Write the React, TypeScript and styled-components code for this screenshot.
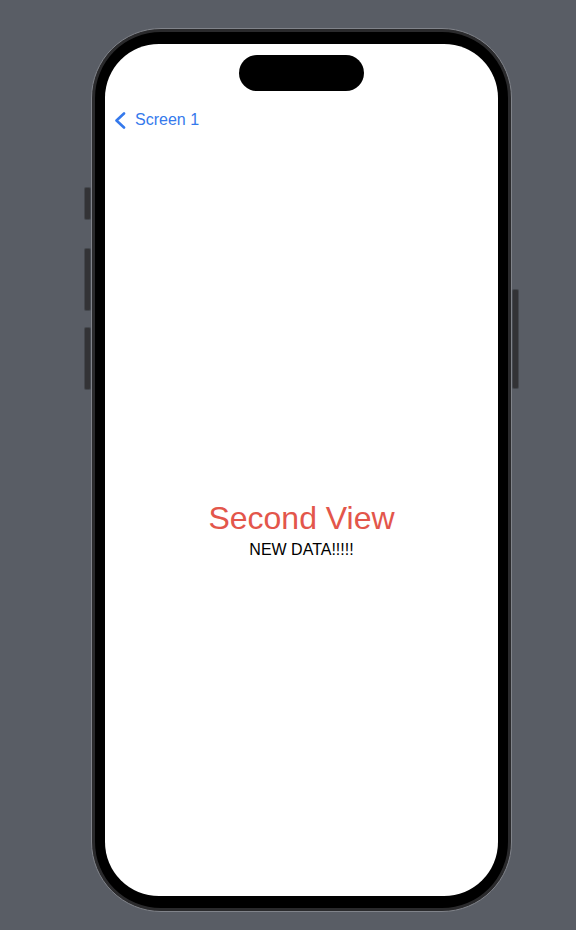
import React from 'react';
import styled, { createGlobalStyle } from 'styled-components';

const GlobalStyle = createGlobalStyle`
  html, body {
    margin: 0;
    padding: 0;
    background: #595d65;
  }
  body {
    font-family: "Liberation Sans", Arial, sans-serif;
  }
`;

const Page = styled.div`
  width: 576px;
  height: 930px;
  box-sizing: border-box;
  padding: 28px 0 0 91px;
  background: #595d65;
  overflow: hidden;
`;

const Phone = styled.div`
  position: relative;
  width: 421px;
  height: 884px;
  box-sizing: border-box;
  border: 1px solid #80838a;
  border-radius: 70px;
  background: #2a2a2c;
  padding: 3px;
`;

const Bezel = styled.div`
  height: 100%;
  box-sizing: border-box;
  border-radius: 66px;
  background: #000;
  padding: 12px 10px;
`;

const Screen = styled.div`
  position: relative;
  height: 100%;
  border-radius: 54px;
  background: #fff;
  display: flex;
  flex-direction: column;
  overflow: hidden;
`;

const Island = styled.div`
  position: absolute;
  top: 11px;
  left: 134px;
  width: 125px;
  height: 36px;
  border-radius: 18px;
  background: #000;
`;

const SideButton = styled.div<{ $side: 'left' | 'right'; $top: number; $height: number }>`
  position: absolute;
  top: ${(p) => p.$top}px;
  ${(p) => (p.$side === 'left' ? 'left: -7px;' : 'right: -7px;')}
  width: 5px;
  height: ${(p) => p.$height}px;
  background: #333336;
  border-radius: 1px;
  box-shadow: 0 0 0 1px #45484e;
`;

const NavBar = styled.div`
  display: flex;
  align-items: center;
  padding: 64px 0 0 9px;
  height: 24px;
`;

const BackButton = styled.button`
  display: flex;
  align-items: center;
  gap: 9px;
  border: none;
  background: none;
  padding: 0;
  color: #3579ec;
  font-family: "Liberation Sans", Arial, sans-serif;
  font-size: 16px;
  cursor: pointer;
`;

const Content = styled.div`
  flex: 1;
  display: flex;
  flex-direction: column;
  align-items: center;
  padding-top: 367px;
`;

const Title = styled.div`
  color: #e3564b;
  font-size: 32px;
  line-height: 38px;
`;

const Subtitle = styled.div`
  margin-top: 3px;
  color: #000;
  font-size: 16px;
  line-height: 20px;
`;

const Chevron = () => (
  <svg width="12" height="17" viewBox="0 0 12 17" fill="none">
    <path d="M10 1.5 L2.5 8.5 L10 15.5" stroke="#3579ec" strokeWidth="2.6" strokeLinecap="round" strokeLinejoin="round" />
  </svg>
);

export default function App() {
  return (
    <>
      <GlobalStyle />
      <Page>
        <Phone>
          <SideButton $side="left" $top={159} $height={31} />
          <SideButton $side="left" $top={220} $height={61} />
          <SideButton $side="left" $top={299} $height={61} />
          <SideButton $side="right" $top={261} $height={98} />
          <Bezel>
            <Screen>
              <Island />
              <NavBar>
                <BackButton>
                  <Chevron />
                  Screen 1
                </BackButton>
              </NavBar>
              <Content>
                <Title>Second View</Title>
                <Subtitle>NEW DATA!!!!!</Subtitle>
              </Content>
            </Screen>
          </Bezel>
        </Phone>
      </Page>
    </>
  );
}
